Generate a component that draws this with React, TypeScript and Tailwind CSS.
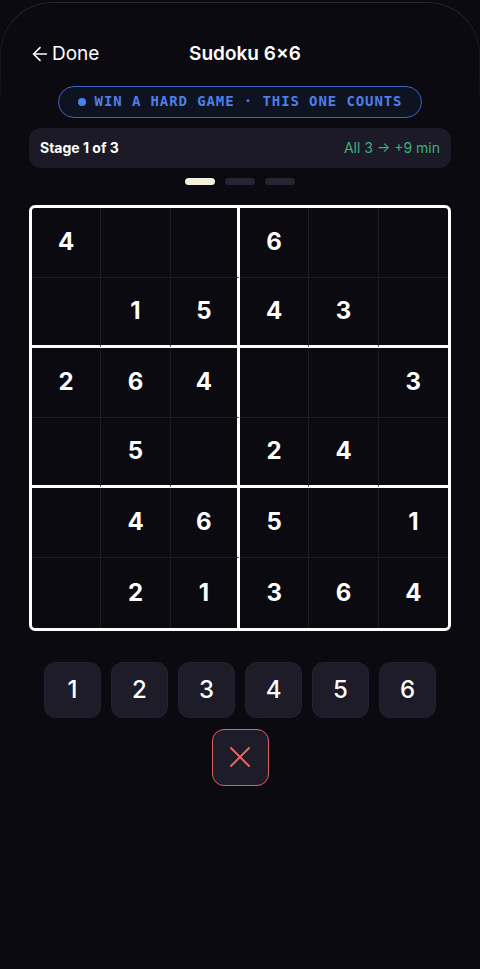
import { ArrowLeft, X } from "lucide-react";

const board: (number | null)[][] = [
  [4, null, null, 6, null, null],
  [null, 1, 5, 4, 3, null],
  [2, 6, 4, null, null, 3],
  [null, 5, null, 2, 4, null],
  [null, 4, 6, 5, null, 1],
  [null, 2, 1, 3, 6, 4],
];

function Cell({ value, row, col }: { value: number | null; row: number; col: number }) {
  const right =
    col === 5
      ? ""
      : col === 2
        ? "border-r-[3px] border-r-white"
        : "border-r border-r-[#1d1c25]";
  const bottom =
    row === 5
      ? ""
      : row === 1 || row === 3
        ? "border-b-[3px] border-b-white"
        : "border-b border-b-[#1d1c25]";

  return (
    <div
      className={`h-[70px] flex items-center justify-center text-[24px] font-bold text-white ${right} ${bottom}`}
    >
      {value ?? ""}
    </div>
  );
}

export default function App() {
  return (
    <div
      className="relative min-h-screen bg-[#0b0a10] text-white"
      style={{ fontFamily: "Inter, 'Noto Sans', sans-serif" }}
    >
      {/* phone bezel highlight */}
      <div className="pointer-events-none absolute inset-x-0 top-[2px] h-[110px] rounded-t-[52px] border-x border-t border-white/[0.12] [mask-image:linear-gradient(to_bottom,black,transparent)]" />

      <div className="min-h-[969px] pt-[40px]">
        {/* Header */}
        <header className="grid grid-cols-3 items-center px-[29px]">
          <button type="button" className="flex items-center gap-[1px] text-[19px] text-white">
            <ArrowLeft size={22} strokeWidth={1.75} />
            <span>Done</span>
          </button>
          <h1 className="text-center text-[19px] font-semibold whitespace-nowrap translate-x-[5px]">
            Sudoku 6×6
          </h1>
          <div />
        </header>

        {/* Badge */}
        <div className="mt-[17px] flex justify-center">
          <div className="flex h-[32px] w-[364px] items-center justify-center gap-[9px] rounded-full border-[1.5px] border-[#3b62c4] bg-[#0e1322]">
            <span className="h-[8px] w-[8px] rounded-full bg-[#4a7ff0]" />
            <span
              className="text-[14px] font-bold tracking-[0.9px] text-[#4d7fe6]"
              style={{ fontFamily: "'DejaVu Sans Mono', 'Liberation Mono', monospace" }}
            >
              WIN A HARD GAME · THIS ONE COUNTS
            </span>
          </div>
        </div>

        <div className="px-[29px]">
          {/* Stage card */}
          <div className="mt-[10px] flex h-[40px] items-center justify-between rounded-xl bg-[#1c1a26] px-[11px]">
            <span className="text-[14px] font-bold text-white">Stage 1 of 3</span>
            <span className="text-[14px] text-[#3fae7c]">All 3 → +9 min</span>
          </div>

          {/* Stage dots */}
          <div className="mt-[10px] flex justify-center gap-[10px]">
            <span className="h-[7px] w-[30px] rounded-full bg-[#f4efdf]" />
            <span className="h-[7px] w-[30px] rounded-full bg-[#272533]" />
            <span className="h-[7px] w-[30px] rounded-full bg-[#272533]" />
          </div>

          {/* Board */}
          <div className="mt-[20px] grid grid-cols-6 overflow-hidden rounded-[6px] border-[3px] border-white bg-[#0b0a10]">
            {board.map((r, ri) =>
              r.map((v, ci) => <Cell key={`${ri}-${ci}`} value={v} row={ri} col={ci} />),
            )}
          </div>
        </div>

        {/* Number pad */}
        <div className="mt-[31px] flex justify-center gap-[10px]">
          {[1, 2, 3, 4, 5, 6].map((n) => (
            <button
              key={n}
              type="button"
              className="flex h-[56px] w-[57px] items-center justify-center rounded-xl border border-[#26243a]/60 bg-[#1e1c28] text-[24px] font-medium text-white"
            >
              {n}
            </button>
          ))}
        </div>

        <div className="mt-[11px] flex justify-center">
          <button
            type="button"
            className="flex h-[57px] w-[57px] items-center justify-center rounded-xl border-[1.5px] border-[#d8635d] bg-[#1e1c28] text-[#e5675f]"
          >
            <X size={36} strokeWidth={1.3} />
          </button>
        </div>
      </div>
    </div>
  );
}
